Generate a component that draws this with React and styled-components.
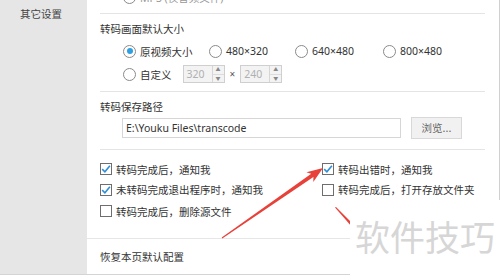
import React from "react";
import styled, { createGlobalStyle } from "styled-components";

const Global = createGlobalStyle`
  html, body { margin: 0; padding: 0; background: #fff; }
  body { width: 500px; height: 275px; overflow: hidden; font-family: "Noto Sans", "Noto Sans CJK SC", sans-serif; }
`;

const Page = styled.div`
  position: relative;
  width: 500px;
  height: 275px;
  display: flex;
  overflow: hidden;
  font-size: 10.5px;
  color: #333;
`;

const Sidebar = styled.div`
  width: 87px;
  flex: none;
  background: #e6e6e6;
  border-bottom: 1px solid #d4d4d4;
  box-sizing: border-box;
`;

const NavItem = styled.div`
  height: 28px;
  line-height: 28px;
  padding-left: 20px;
  color: #444;
  font-family: "Noto Sans CJK SC", sans-serif;
`;

const Panel = styled.div`
  flex: 1;
  display: flex;
  flex-direction: column;
  background: #fff;
  border-right: 1px solid #d0d0d0;
`;

const Content = styled.div`
  flex: 1;
  padding: 0 14px 0 13px;
  display: flex;
  flex-direction: column;
`;

const Divider = styled.div`
  height: 1px;
  background: #e4e4e4;
  margin-top: ${(p) => p.$mt}px;
`;

const Title = styled.div`
  height: 16px;
  line-height: 16px;
  margin-top: ${(p) => p.$mt}px;
  font-family: "Noto Sans CJK SC", sans-serif;
`;

const OptionRow = styled.div`
  display: flex;
  align-items: center;
  height: ${(p) => p.$h || 20}px;
  margin-top: ${(p) => p.$mt}px;
  padding-left: ${(p) => p.$indent || 0}px;
`;

const Option = styled.label`
  display: flex;
  align-items: center;
  width: ${(p) => (p.$w ? p.$w + "px" : "auto")};
  color: ${(p) => (p.$muted ? "#999" : "#333")};
  font-family: "Noto Sans", "Noto Sans CJK SC", sans-serif;
  white-space: nowrap;
`;

const Radio = styled.span`
  width: 13px;
  height: 13px;
  box-sizing: border-box;
  border: 1px solid #8a8a8a;
  border-radius: 50%;
  background: #fff;
  margin-right: 4px;
  display: flex;
  align-items: center;
  justify-content: center;
  flex: none;
  &::after {
    content: "";
    display: ${(p) => (p.$on ? "block" : "none")};
    width: 6px;
    height: 6px;
    border-radius: 50%;
    background: #2f9fe0;
  }
`;

const Spin = styled.div`
  width: 42px;
  height: 18px;
  box-sizing: border-box;
  border: 1px solid #cfcfcf;
  background: #f3f3f3;
  display: flex;
  align-items: stretch;
  margin-left: ${(p) => p.$ml}px;
`;

const SpinValue = styled.span`
  flex: 1;
  line-height: 16px;
  padding-left: 3px;
  color: #b0b0b0;
  font-family: "Noto Sans", sans-serif;
`;

const SpinBtns = styled.div`
  width: 11px;
  border-left: 1px solid #d6d6d6;
  display: flex;
  flex-direction: column;
  & > span {
    flex: 1;
    display: flex;
    align-items: center;
    justify-content: center;
    font-size: 5px;
    color: #888;
    line-height: 1;
  }
  & > span + span { border-top: 1px solid #dcdcdc; }
`;

const Times = styled.span`
  margin-left: 5px;
  color: #555;
  font-size: 10px;
`;

const PathRow = styled.div`
  display: flex;
  align-items: center;
  height: 22px;
  margin-top: 2px;
  padding-left: 22px;
`;

const PathInput = styled.div`
  width: 279px;
  height: 20px;
  box-sizing: border-box;
  border: 1px solid #d6d6d6;
  line-height: 18px;
  padding-left: 3px;
  color: #333;
  font-family: "Noto Sans", sans-serif;
  font-size: 10.5px;
`;

const Button = styled.div`
  margin-left: 10px;
  width: 51px;
  height: 22px;
  box-sizing: border-box;
  border: 1px solid #d8d8d8;
  background: #f1f1f1;
  color: #666;
  text-align: center;
  line-height: 20px;
  font-family: "Noto Sans CJK SC", sans-serif;
`;

const CheckGrid = styled.div`
  display: grid;
  grid-template-columns: 222px 1fr;
  grid-template-rows: 20px 21px 22px;
  align-items: center;
  margin-top: 9px;
`;

const Check = styled.label`
  display: flex;
  align-items: center;
  white-space: nowrap;
  font-family: "Noto Sans CJK SC", sans-serif;
`;

const Box = styled.span`
  width: 12px;
  height: 12px;
  box-sizing: border-box;
  border: 1px solid #6e6e6e;
  background: #fff;
  margin-right: 4px;
  flex: none;
  display: flex;
  align-items: center;
  justify-content: center;
`;

const Footer = styled.div`
  height: 37px;
  box-sizing: border-box;
  border-top: 1px solid #e6e6e6;
  border-bottom: 1px solid #d4d4d4;
  padding-left: 13px;
  display: flex;
  align-items: center;
  font-family: "Noto Sans CJK SC", sans-serif;
`;

const Overlay = styled.svg`
  position: absolute;
  left: 0;
  top: 0;
  width: 500px;
  height: 275px;
  pointer-events: none;
`;

const Watermark = styled.div`
  position: absolute;
  left: 350px;
  top: 200px;
  width: 150px;
  height: 75px;
  background: #fff;
  color: #d6d6d6;
  font-size: 35px;
  line-height: 1;
  font-family: "Noto Sans CJK SC", sans-serif;
  box-sizing: border-box;
  padding: 18px 0 0 5px;
  letter-spacing: 0;
  white-space: nowrap;
`;

function Tick() {
  return (
    <svg width="10" height="10" viewBox="0 0 10 10">
      <path d="M1.2 5.2 L3.9 7.8 L8.9 1.8" fill="none" stroke="#2f8fd6" strokeWidth="1.6" />
    </svg>
  );
}

function CheckItem({ on, children }) {
  return (
    <Check>
      <Box>{on && <Tick />}</Box>
      {children}
    </Check>
  );
}

function SpinBox({ value, ml }) {
  return (
    <Spin $ml={ml}>
      <SpinValue>{value}</SpinValue>
      <SpinBtns>
        <span>▲</span>
        <span>▼</span>
      </SpinBtns>
    </Spin>
  );
}

export default function App() {
  return (
    <Page>
      <Global />
      <Sidebar>
        <NavItem>其它设置</NavItem>
      </Sidebar>
      <Panel>
        <Content>
          <OptionRow $mt={-13} $indent={23}>
            <Option $muted>
              <Radio />
              MP3 (仅音频文件)
            </Option>
          </OptionRow>
          <Divider $mt={6} />
          <Title $mt={7}>转码画面默认大小</Title>
          <OptionRow $mt={4} $indent={23}>
            <Option $w={86}>
              <Radio $on />
              原视频大小
            </Option>
            <Option $w={86}>
              <Radio />
              480×320
            </Option>
            <Option $w={88}>
              <Radio />
              640×480
            </Option>
            <Option>
              <Radio />
              800×480
            </Option>
          </OptionRow>
          <OptionRow $mt={3} $indent={23}>
            <Option>
              <Radio />
              自定义
            </Option>
            <SpinBox value="320" ml={11} />
            <Times>×</Times>
            <SpinBox value="240" ml={5} />
          </OptionRow>
          <Divider $mt={7} />
          <Title $mt={7}>转码保存路径</Title>
          <PathRow>
            <PathInput>E:\Youku Files\transcode</PathInput>
            <Button>浏览...</Button>
          </PathRow>
          <Divider $mt={10} />
          <CheckGrid>
            <CheckItem on>转码完成后，通知我</CheckItem>
            <CheckItem on>转码出错时，通知我</CheckItem>
            <CheckItem on>未转码完成退出程序时，通知我</CheckItem>
            <CheckItem>转码完成后，打开存放文件夹</CheckItem>
            <CheckItem>转码完成后，删除源文件</CheckItem>
          </CheckGrid>
        </Content>
        <Footer>恢复本页默认配置</Footer>
      </Panel>
      <Overlay viewBox="0 0 500 275">
        <polygon
          fill="#e8413a"
          points="221.7,237.6 311.2,173.8 306.4,172.2 323,168 313.3,182.1 313.4,177.0 222.3,238.4"
        />
        <polygon fill="#e8413a" points="335,207.5 336,207 362,233 359,235" />
      </Overlay>
      <Watermark>软件技巧</Watermark>
    </Page>
  );
}
